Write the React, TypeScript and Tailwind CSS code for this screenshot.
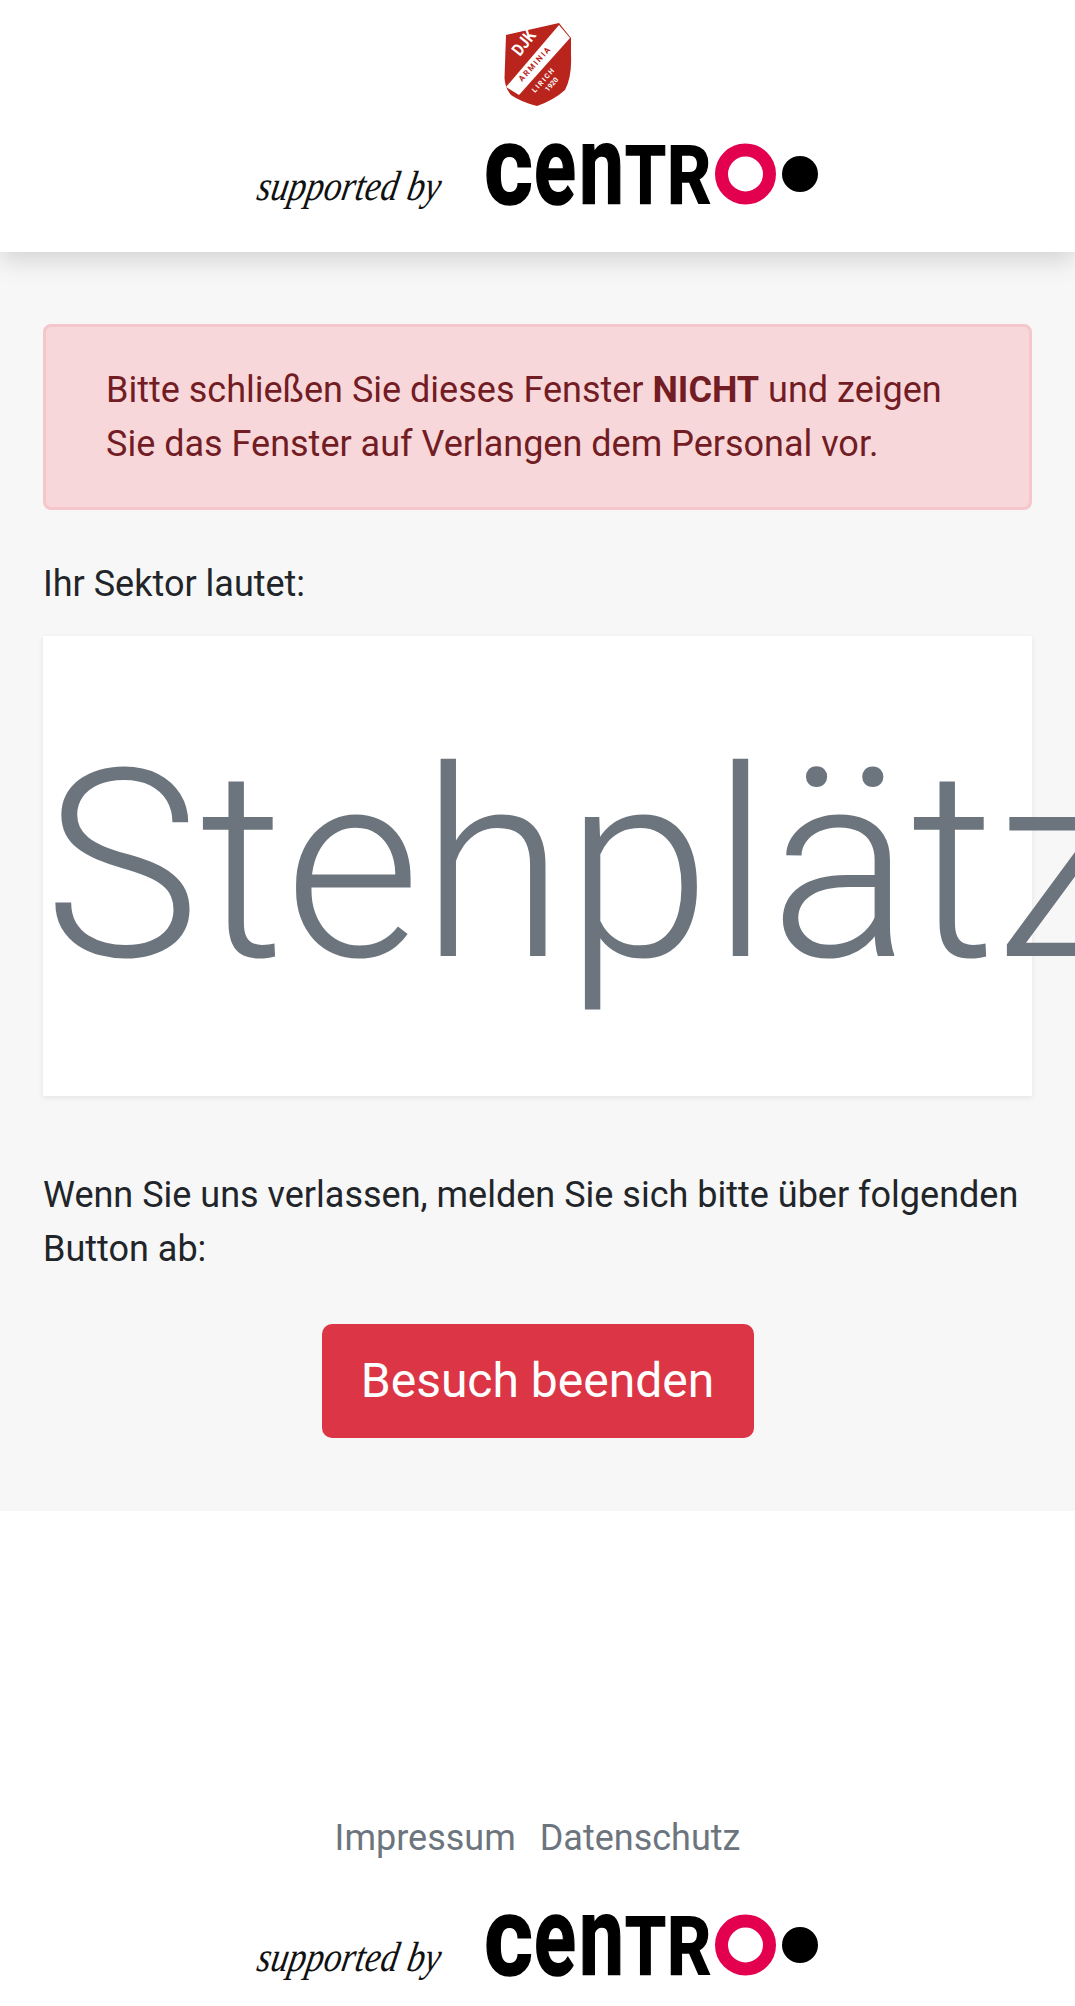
function Crest() {
  const label = { fontFamily: "Roboto, sans-serif", fontWeight: 700 };
  return (
    <svg width="70" height="86" viewBox="0 0 70 86" className="block">
      <path d="M3 13 L56 1 L68 16 L68 33 Q69 55 62 68 Q51 78 34 84 Q18 80 8 73 Q2 66 1.5 56 Z" fill="#b9241c" />
      <path d="M3 65 L56 3 L67 16 L16 73 Z" fill="#ffffff" />
      <text transform="translate(17 35) rotate(-52)" fontSize="17" textLength="27" lengthAdjust="spacingAndGlyphs" fill="#ffffff" {...label}>
        DJK
      </text>
      <text transform="translate(19 60) rotate(-48)" fontSize="8" letterSpacing="1.6" fill="#b9241c" {...label}>
        ARMINIA
      </text>
      <text transform="translate(32 71) rotate(-48)" fontSize="7" letterSpacing="1.5" fill="#ffffff" {...label}>
        LIRICH
      </text>
      <text transform="translate(45 70) rotate(-48)" fontSize="7" fill="#ffffff" {...label}>
        1920
      </text>
    </svg>
  );
}

const logoLetters = [
  { ch: "c", x: -2, w: 49, size: 112 },
  { ch: "e", x: 48, w: 42, size: 112 },
  { ch: "n", x: 93, w: 45, size: 112 },
  { ch: "T", x: 139, w: 41, size: 82 },
  { ch: "R", x: 181, w: 44, size: 82 },
];

function SupportedBy() {
  return (
    <div className="flex items-center justify-center gap-[44px]">
      <span className="w-[187px] origin-left translate-x-[3px] translate-y-[11px] scale-x-[0.84] -skew-x-12 whitespace-nowrap font-['Liberation_Serif',serif] text-[42px] italic leading-none text-[#111111]">
        supported by
      </span>
      <svg width="334" height="64" viewBox="0 0 334 64" className="block overflow-visible">
        {logoLetters.map((l) => (
          <text
            key={l.ch}
            x={l.x}
            y="61"
            textLength={l.w}
            lengthAdjust="spacingAndGlyphs"
            fontSize={l.size}
            fontWeight="700"
            fill="#000000"
            stroke="#000000"
            strokeWidth="1.5"
            fontFamily="Roboto, sans-serif"
          >
            {l.ch}
          </text>
        ))}
        <circle cx="259.5" cy="31" r="24" fill="none" stroke="#e2004f" strokeWidth="13" />
        <circle cx="314" cy="31" r="18" fill="#000000" />
      </svg>
    </div>
  );
}

export default function App() {
  return (
    <div className="flex min-h-[2006px] flex-col overflow-hidden bg-white font-['Roboto',sans-serif] text-[36px] leading-[54px] text-[#212529]">
      {/* Header */}
      <header className="relative z-10 flex h-[252px] flex-col items-center bg-white pt-[22px] shadow-[0_8px_24px_rgba(0,0,0,0.15)]">
        <Crest />
        <div className="mt-[35px]">
          <SupportedBy />
        </div>
      </header>

      {/* Main */}
      <main className="h-[1259px] bg-[#f7f7f7] px-[43px] pt-[72px]">
        <div className="rounded-[8px] border-[3px] border-[#f5c6cb] bg-[#f8d7da] px-[60px] py-[36px] text-[#721c24]">
          Bitte schließen Sie dieses Fenster <b>NICHT</b> und zeigen Sie das Fenster auf Verlangen dem Personal vor.
        </div>

        <p className="mt-[47px]">Ihr Sektor lautet:</p>

        <div className="mt-[25px] flex h-[460px] items-center bg-white pl-[1px] shadow-[0_2px_6px_rgba(0,0,0,0.08)]">
          <span className="whitespace-nowrap text-[263px] font-light leading-none text-[#6c757d]">Stehplätze</span>
        </div>

        <p className="mt-[72px]">Wenn Sie uns verlassen, melden Sie sich bitte über folgenden Button ab:</p>

        <div className="mt-[48px] flex justify-center">
          <button className="h-[114px] w-[432px] rounded-[10px] bg-[#dc3545] text-[48px] text-white">Besuch beenden</button>
        </div>
      </main>

      {/* Footer */}
      <footer className="flex flex-1 flex-col items-center bg-white pt-[300px]">
        <div className="flex gap-[24px] text-[#6c757d]">
          <a>Impressum</a>
          <a>Datenschutz</a>
        </div>
        <div className="mt-[49px]">
          <SupportedBy />
        </div>
      </footer>
    </div>
  );
}
